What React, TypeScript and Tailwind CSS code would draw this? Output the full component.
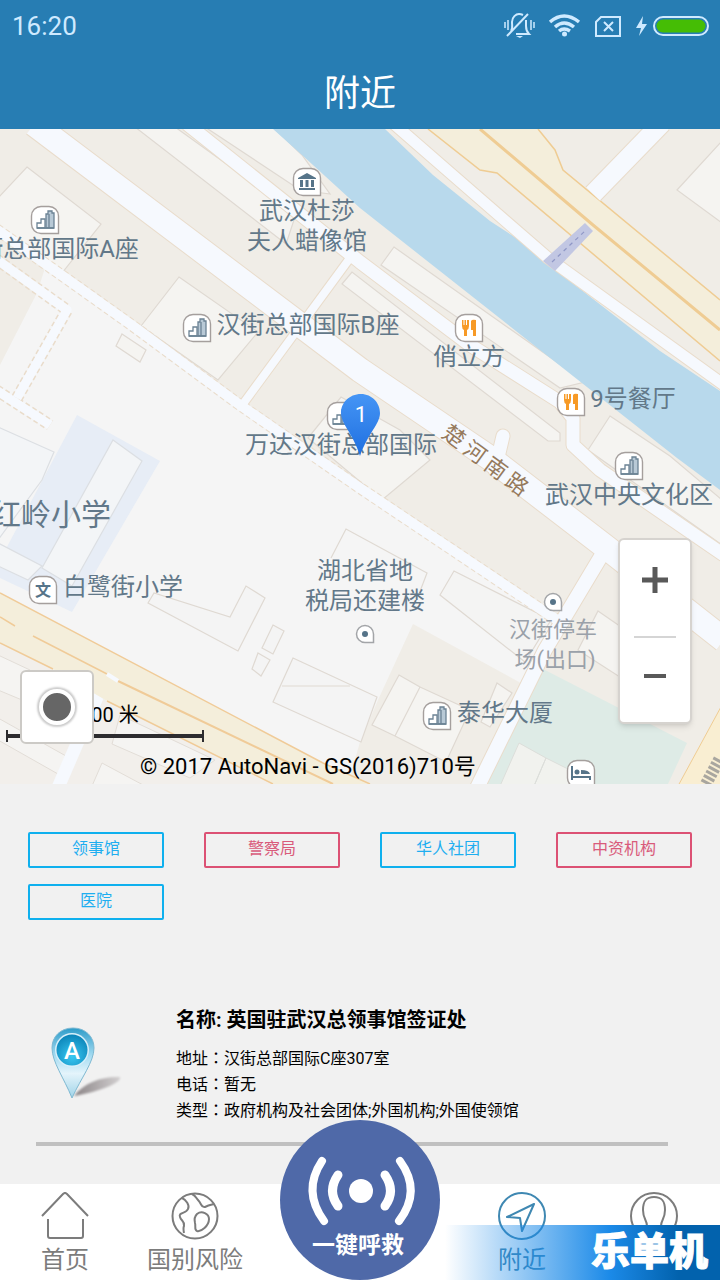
import { useState } from 'react';

const FONT = "font-[Roboto,'Noto_Sans_CJK_SC',sans-serif]";

const categories = [
  { name: '领事馆', tone: 'blue' },
  { name: '警察局', tone: 'red' },
  { name: '华人社团', tone: 'blue' },
  { name: '中资机构', tone: 'red' },
  { name: '医院', tone: 'blue' },
];

const places = [
  {
    name: '英国驻武汉总领事馆签证处',
    details: [
      { label: '地址', value: '汉街总部国际C座307室' },
      { label: '电话', value: '暂无' },
      { label: '类型', value: '政府机构及社会团体;外国机构;外国使领馆' },
    ],
  },
];

type PoiKind = 'building' | 'food' | 'museum' | 'school' | 'hotel' | 'dot';

const pois: { x: number; y: number; kind: PoiKind }[] = [
  { x: 307, y: 182, kind: 'museum' },
  { x: 45, y: 220, kind: 'building' },
  { x: 197, y: 328, kind: 'building' },
  { x: 469, y: 328, kind: 'food' },
  { x: 571, y: 402, kind: 'food' },
  { x: 341, y: 416, kind: 'building' },
  { x: 629, y: 466, kind: 'building' },
  { x: 43, y: 590, kind: 'school' },
  { x: 437, y: 716, kind: 'building' },
  { x: 581, y: 774, kind: 'hotel' },
  { x: 553, y: 602, kind: 'dot' },
  { x: 365, y: 634, kind: 'dot' },
];

const labels = [
  { x: 307, y: 219, text: '武汉杜莎' },
  { x: 307, y: 249, text: '夫人蜡像馆' },
  { x: 59, y: 257, text: '街总部国际A座' },
  { x: 308, y: 333, text: '汉街总部国际B座' },
  { x: 469, y: 365, text: '俏立方' },
  { x: 633, y: 407, text: '9号餐厅' },
  { x: 341, y: 453, text: '万达汉街总部国际' },
  { x: 629, y: 503, text: '武汉中央文化区' },
  { x: 123, y: 595, text: '白鹭街小学' },
  { x: 365, y: 579, text: '湖北省地' },
  { x: 365, y: 609, text: '税局还建楼' },
  { x: 505, y: 721, text: '泰华大厦' },
];

function Poi({ x, y, kind }: { x: number; y: number; kind: PoiKind }) {
  if (kind === 'dot') {
    return (
      <g transform={`translate(${x} ${y})`}>
        <path d="M0-8.500A8.500 8.500 0 0 0 0 8.500H8.500V0A8.500 8.500 0 0 0 0-8.500Z" fill="#fff" stroke="#a3a5a8" strokeWidth="1.500" />
        <circle r="3" fill="#567489" />
      </g>
    );
  }
  return (
    <g transform={`translate(${x} ${y})`}>
      <path
        d="M-4-13.500H4A9.500 9.500 0 0 1 13.500-4V13.500H-4A9.500 9.500 0 0 1-13.500 4V-4A9.500 9.500 0 0 1-4-13.500Z"
        fill="#fff"
        stroke="#a59f9d"
        strokeWidth="1.400"
      />
      {kind === 'building' && (
        <g fill="#b8c9d6" stroke="#6b8294" strokeWidth="1.300">
          <path d="M-8 3H-4V-1H0V8H-8Z" fill="#fff" />
          <path d="M1 8V-6H3V-9H7V-7H9V8Z" />
          <path d="M4-6V8M-8 8H9" />
        </g>
      )}
      {kind === 'food' && (
        <g fill="#f79a26">
          <path d="M-7-8H-5.500V-3H-4.500V-8H-3V-3H-2V-8H0V-2Q0 1-2 2V8H-5V2Q-7 1-7-2Z" />
          <path d="M2-7Q3-9 7-8V8H4V2H2Z" />
        </g>
      )}
      {kind === 'museum' && (
        <g fill="#567489">
          <path d="M0-9 9-4V-3H-9V-4ZM-7-2H-4V5H-7ZM-1.500-2H1.500V5H-1.500ZM4-2H7V5H4ZM-8 6H8V8H-8Z" />
        </g>
      )}
      {kind === 'school' && (
        <text y="6" textAnchor="middle" className="fill-[#567489] text-[16px] font-bold">
          文
        </text>
      )}
      {kind === 'hotel' && (
        <g fill="#567489">
          <path d="M-10-8H-8V2H10V6H8V4H-8V6H-10ZM0-4Q8-4 9 0H0Z" />
          <circle cx="-4" cy="-2" r="2.500" />
        </g>
      )}
    </g>
  );
}

function MapDrawing() {
  return (
    <svg viewBox="0 129 720 655" preserveAspectRatio="xMidYMid slice" className="block h-auto w-full">
      <rect y="129" width="720" height="655" fill="#f0ede7" />

      {/* open ground */}
      <path d="M45 268 560 620 480 784H0V365L37 293Z" fill="#f5f5f5" />
      <path d="M413 624 530 688 478 784H348L360 742 378 700Z" fill="#f0ede7" />

      {/* school campus */}
      <path d="M77 415 160 461 72 612 0 578V560Z" fill="#e7edf6" />
      <g fill="#f3f5f7" stroke="#dcdfe3" strokeWidth="1.200">
        <path d="M113 440 142 461 72 586 42 568Z" />
        <path d="M-2 427 54 452 42 480-2 540Z" />
        <path d="M-2 543 42 566 28 580-2 566Z" />
      </g>

      {/* buildings */}
      <g fill="#f5f4f1" stroke="#dfd9d2" strokeWidth="1.200">
        <path d="M27 167 101 224 62 273-2 230V198Z" />
        <path d="M179 277 258 332 218 380 141 326Z" />
        <path d="M122 334 146 350 140 362 116 346Z" />
        <path d="M135 127H175L296 214 286 244Z" />
        <path d="M205 127H273L302 155 330 194 300 190Z" />
        <path d="M342 284 352 272 560 433 560 441 548 441Z" />
        <path d="M394 247 585 382 560 388 381 265Z" />
        <path d="M610 416 670 456 722 500V545L588 450Z" />
        <path d="M722 141 677 190 722 223Z" />
        <path d="M341 397 400 430 430 460 382 500 308 438Z" />
        <path d="M454 571 551 620 525 662 440 595Z" fill="#f4f4f3" />
        <path d="M598 611 640 640V690L578 650Z" />
        <path d="M399 675 420 687 395 736 372 725ZM420 687 470 710 446 762 395 736Z" />
        <path d="M497 683 512 693 490 727 481 722Z" />
        <path d="M148 603 154 593 230 617 246 586 265 598 238 651Z" fill="#f4f4f4" />
        <path d="M273 625 284 631 273 654 262 648ZM258 653 270 660 261 676 252 669Z" fill="#f4f4f4" />
        <path d="M293 658 377 697 361 742 273 702Z" fill="#f4f4f4" />
        <path d="M331 558 346 529 427 573 419 594" fill="none" />
        <path d="M282 686H350" fill="none" />
      </g>

      {/* park */}
      <path d="M543 669 687 743 668 784H485Z" fill="#deebe6" />
      <path d="M519 743 546 758 534 786H500ZM546 758 590 780V786H534Z" fill="#f1f2ee" stroke="#dcdeda" />

      {/* river */}
      <path
        d="M273 129 302 155 360 208 677 458 720 490V391L660 351 557 271 527 245 490 221 433 175 385 129Z"
        fill="#b8d9ec"
      />

      {/* highway, north east */}
      <path d="M428 129 480 170 497 173 720 361V300L563 170 555 150 538 129Z" fill="#f4eedb" />
      <g fill="none" stroke="#efcc93" strokeWidth="1.500">
        <path d="M428 129 480 170 497 173 720 361M538 129 555 150 563 170 720 300" />
        <path d="M480 129 593 225 720 330" strokeWidth="3" />
      </g>

      {/* streets: outline first, then surface */}
      <g fill="none" stroke="#e9dccb" strokeLinejoin="round">
        <path d="M34 124 360 370 490 458 607 548 724 640" strokeWidth="26" />
        <path d="M187 124 360 262 470 345 560 402 573 418 573 445 600 470 724 555" strokeWidth="15" />
        <path d="M394 124 548 258 724 385" strokeWidth="13" />
        <path d="M662 123 593 194" strokeWidth="21" />
        <path d="M350 258 240 408" strokeWidth="10" />
        <path d="M-4 229 67 279 133 326 240 405 360 488 557 620" strokeWidth="12" strokeDasharray="5 3" />
        <path d="M-4 259 67 310 17 398M-4 390 50 425" strokeWidth="12" strokeDasharray="5 3" />
        <path d="M603 553 545 650 476 790" strokeWidth="16" />
        <path d="M503 436 495 470" strokeWidth="15" strokeLinecap="round" />
      </g>
      <g fill="none" stroke="#f6f9fe" strokeLinejoin="round">
        <path d="M34 124 360 370 490 458 607 548 724 640" strokeWidth="24" />
        <path d="M187 124 360 262 470 345 560 402 573 418 573 445 600 470 724 555" strokeWidth="13" />
        <path d="M394 124 548 258 724 385" strokeWidth="11" />
        <path d="M662 123 593 194" strokeWidth="19" />
        <path d="M350 258 240 408" strokeWidth="8" />
        <path d="M-4 229 67 279 133 326 240 405 360 488 557 620" strokeWidth="10" />
        <path d="M-4 259 67 310 17 398M-4 390 50 425" strokeWidth="9" />
        <path d="M603 553 545 650 476 790" strokeWidth="14" />
        <path d="M503 436 495 470" strokeWidth="13" strokeLinecap="round" />
      </g>

      {/* footbridge */}
      <path d="M543 261 585 223 593 231 555 271Z" fill="#c2c7e3" />
      <path d="M552 262 586 230" stroke="#8f97c6" strokeWidth="1.200" strokeDasharray="4 4" />

      {/* highway, south west */}
      <path d="M0 643 53 669 107 701 273 784H0Z" fill="#f2efeb" />
      <g fill="#f5f4f2" stroke="#e2ddd7">
        <path d="M-2 655 30 670 22 700-2 690ZM-2 718 66 756 58 774-2 740ZM120 715 215 760 190 778 112 744ZM102 763 145 786H92Z" />
      </g>
      <path d="M98 695 57 790" stroke="#f6f9fe" strokeWidth="13" />
      <path d="M0 593 323 763 370 784H273L107 701 53 669 0 643Z" fill="#f4eedb" />
      <g fill="none" stroke="#f0cb98" strokeWidth="1.500">
        <path d="M0 593 323 763 370 784M0 643 53 669M107 701 273 784" />
        <path d="M33 636 107 674M0 617 15 626" />
        <path d="M118 681 333 784" strokeWidth="2" />
      </g>
      <path d="M107 674 118 681" stroke="#f6f9fe" strokeWidth="4" />
      <path d="M722 705 678 786H722Z" fill="#f9eed2" stroke="#efcc93" />
      <path d="M706 784 720 758" stroke="#a9a69f" strokeWidth="12" strokeDasharray="3 2" />

      {pois.map((p) => (
        <Poi key={`${p.x}-${p.y}`} {...p} />
      ))}

      <g textAnchor="middle" className="fill-[#627889] text-[24px]">
        {labels.map((l) => (
          <text key={l.text} x={l.x} y={l.y}>
            {l.text}
          </text>
        ))}
        <text x="51" y="525" className="text-[30px]">
          红岭小学
        </text>
        <g className="fill-[#9aa1a9] text-[22px]">
          <text x="553" y="637">汉街停车</text>
          <text x="555" y="667">场(出口)</text>
        </g>
      </g>
      <g textAnchor="middle" className="fill-[#957a5c] text-[22px]">
        {['楚', '河', '南', '路'].map((ch, i) => (
          <text key={ch} y="8" transform={`translate(${454 + i * 21} ${436 + i * 16}) rotate(36)`}>
            {ch}
          </text>
        ))}
      </g>

      {/* result marker */}
      <defs>
        <linearGradient id="marker" x1="0" y1="0" x2="0" y2="1">
          <stop offset="0" stopColor="#4595f5" />
          <stop offset="1" stopColor="#1f6fe0" />
        </linearGradient>
      </defs>
      <path d="M361 394C349 394 341 403 341 413C341 424 353 433 360 456C368 433 380 424 380 413C380 403 372 394 361 394Z" fill="url(#marker)" />
      <text x="361" y="422" textAnchor="middle" className="fill-white text-[22px]">
        1
      </text>

      {/* scale and copyright */}
      <path d="M7 736H203M7 730V742M203 730V742" stroke="#2d2c2f" strokeWidth="2" />
      <path d="M7 736H203" stroke="#2d2c2f" strokeWidth="4" />
      <text x="80" y="722" className="fill-black text-[20px]">
        100 米
      </text>
      <text x="140" y="774" className="fill-black text-[22px]">
        © 2017 AutoNavi - GS(2016)710号
      </text>
    </svg>
  );
}

function StatusIcons() {
  return (
    <svg viewBox="500 8 212 34" className="h-[34px] w-[212px]" fill="none" stroke="#cfeaff" strokeWidth="2">
      {/* muted bell */}
      <path d="M511 30C513 28 512 25 512 21C512 16 516 13 519 13Q521 13 523 14M526 19V25C526 29 527 31 529 33H516" />
      <path d="M507 35 528 13" />
      <path d="M505 21V27M508 19V29M531 19V29M534 21V27" strokeWidth="1.500" />
      <path d="M516 35H523L520 37Z" fill="#cfeaff" stroke="none" />
      {/* wifi */}
      <g strokeWidth="3.500">
        <path d="M550 21Q564 9 579 21" />
        <path d="M555 26Q564 18 574 26" />
        <path d="M559 30Q564 26 570 30" />
      </g>
      <circle cx="564.500" cy="33" r="2.500" fill="#cfeaff" stroke="none" />
      {/* no sim */}
      <path d="M601 16H620V35H596V21Z" />
      <path d="M604 21 613 30M613 21 604 30" />
      {/* charging battery */}
      <path d="M643 15 636 27H641L639 35 647 23H642Z" fill="#cfeaff" stroke="none" />
      <rect x="654" y="16" width="54" height="18" rx="9" />
      <rect x="656.500" y="18.500" width="49" height="13" rx="6.500" fill="#45bd05" stroke="none" />
    </svg>
  );
}

function PlacePin() {
  return (
    <svg viewBox="48 1024 78 78" className="h-[78px] w-[78px]">
      <defs>
        <linearGradient id="pin" x1="0" y1="0" x2="0" y2="1">
          <stop offset="0" stopColor="#2d9cc9" />
          <stop offset="0.400" stopColor="#a6dcf2" />
          <stop offset="0.650" stopColor="#e4f4fb" />
          <stop offset="1" stopColor="#9fd3e8" />
        </linearGradient>
        <radialGradient id="disc" cx="0.500" cy="0.700" r="0.700">
          <stop offset="0" stopColor="#39c8f2" />
          <stop offset="1" stopColor="#0b84b8" />
        </radialGradient>
        <linearGradient id="shade">
          <stop offset="0" stopColor="#8b8587" />
          <stop offset="1" stopColor="#d2cfd0" />
        </linearGradient>
        <filter id="soft">
          <feGaussianBlur stdDeviation="1" />
        </filter>
      </defs>
      <path d="M74 1096C84 1082 104 1076 120 1077C122 1083 98 1092 74 1096Z" fill="url(#shade)" filter="url(#soft)" />
      <path
        d="M73 1028C60 1028 52 1037 52 1048C52 1062 64 1078 72 1098C81 1078 94 1062 94 1048C94 1037 86 1028 73 1028Z"
        fill="url(#pin)"
        stroke="#7fb9d2"
      />
      <circle cx="72" cy="1050" r="17" fill="#d8f0fa" />
      <circle cx="72" cy="1050" r="15.500" fill="url(#disc)" />
      <text x="72" y="1059" textAnchor="middle" className="fill-white text-[24px] font-medium">
        A
      </text>
    </svg>
  );
}

function Chip({ name, tone, onClick }: { name: string; tone: string; onClick: () => void }) {
  return (
    <button
      onClick={onClick}
      className={`h-9 rounded-[2px] border-2 pb-[2px] text-base leading-6 ${
        tone === 'blue' ? 'border-[#0fb0ee] text-[#1eaef0]' : 'border-[#dc5174] text-[#d95b7b]'
      }`}
    >
      {name}
    </button>
  );
}

const navItem = 'flex flex-col items-center pt-2 text-2xl leading-8';

export default function App() {
  const [, setCategory] = useState('领事馆');

  return (
    <div className={`flex min-h-screen flex-col bg-[#f1f1f1] text-black ${FONT}`}>
      <header className="bg-[#277db3]">
        <div className="flex h-[52px] items-center justify-between pr-2 pl-3">
          <span className="text-[26px] text-[#cfeaff]">16:20</span>
          <StatusIcons />
        </div>
        <h1 className="h-[77px] text-center text-4xl leading-[84px] text-white">附近</h1>
      </header>

      <main className="grow">
        <section className="relative" aria-label="地图">
          <MapDrawing />
          <button
            aria-label="定位"
            className="absolute bottom-10 left-5 flex h-[74px] w-[74px] items-center justify-center rounded-md border-2 border-[#cccac6] bg-white"
          >
            <span className="h-9 w-9 rounded-full border-4 border-white bg-[#666] shadow-[0_0_2px_2px_#ccc]" />
          </button>
          <div className="absolute right-7 bottom-[60px] flex h-[186px] w-[74px] flex-col items-center rounded-md border-2 border-[#d6d3cf] bg-white shadow-md">
            <button aria-label="放大" className="flex w-full grow items-center justify-center">
              <svg viewBox="0 0 26 26" className="mb-4 h-[26px] w-[26px]">
                <path d="M0 13H26M13 0V26" stroke="#595959" strokeWidth="5" />
              </svg>
            </button>
            <span className="h-[2px] w-[42px] bg-[#d5d5d5]" />
            <button aria-label="缩小" className="flex h-[84px] w-full items-center justify-center">
              <svg viewBox="0 0 22 4" className="mb-2 h-1 w-[22px]">
                <path d="M0 2H22" stroke="#595959" strokeWidth="4" />
              </svg>
            </button>
          </div>
        </section>

        <section className="grid grid-cols-4 gap-x-10 gap-y-4 px-7 pt-12">
          {categories.map((c) => (
            <Chip key={c.name} name={c.name} tone={c.tone} onClick={() => setCategory(c.name)} />
          ))}
        </section>

        <ul className="mt-[86px] mr-[52px] ml-9">
          {places.map((p) => (
            <li key={p.name} className="flex border-b-4 border-[#c0c0c0] pb-[18px]">
              <div className="w-[140px] shrink-0 pt-[18px] pl-3">
                <PlacePin />
              </div>
              <div>
                <h2 className="mb-3 text-xl leading-7 font-bold">名称: {p.name}</h2>
                {p.details.map((d) => (
                  <p key={d.label} className="text-base leading-[26px]">
                    {d.label}
                    <span className="font-['Noto_Sans_CJK_TC',sans-serif] leading-none" lang="zh-TW">：</span>
                    {d.value}
                  </p>
                ))}
              </div>
            </li>
          ))}
        </ul>
      </main>

      <nav className="relative grid h-24 grid-cols-[65fr_65fr_100fr_62fr_68fr] bg-white text-[#7c7c7c]">
        <a href="#home" className={navItem}>
          <svg viewBox="0 0 48 48" className="h-12 w-12" fill="none" stroke="#7c7c7c" strokeWidth="2">
            <path d="M1 24 22 2Q24 0 26 2L47 24" />
            <path d="M7 27V44Q7 46 9 46H40Q42 46 42 44V27" />
          </svg>
          <span className="mt-1">首页</span>
        </a>
        <a href="#risk" className={navItem}>
          <svg viewBox="0 0 48 48" className="h-12 w-12" fill="none" stroke="#7c7c7c" strokeWidth="2">
            <circle cx="24" cy="24" r="22.500" />
            <path d="M11 6C15 8 19 13 17 17C15 22 7 20 9 25C10 29 14 29 13 34Q12 36 13 41" />
            <path d="M21 2C25 4 25 6 27 8C31 12 30 16 34 15C38 13 39 13 43 12" />
            <path d="M26 22C31 18 38 22 38 27C38 34 30 40 26 39C23 38 25 34 24 31C23 27 24 24 26 22Z" />
          </svg>
          <span className="mt-1">国别风险</span>
        </a>
        <div className="flex items-end justify-center">
          <button className="-mt-16 h-40 w-40 shrink-0 rounded-full bg-[#4f69a8] text-white">
            <svg viewBox="0 0 160 112" className="block w-40" fill="none" stroke="#fff" strokeLinecap="round">
              <circle cx="81" cy="71" r="12" fill="#fff" stroke="none" />
              <path d="M42 41Q22 71 44 101M120 41Q142 71 119 101" strokeWidth="8" />
              <path d="M58 55Q47 71 58 86M105 55Q116 71 105 86" strokeWidth="9" />
            </svg>
            <span className="block h-12 pr-1 text-[23px] leading-7 font-bold">一键呼救</span>
          </button>
        </div>
        <a href="#nearby" className={`${navItem} text-[#3f88b2]`}>
          <svg viewBox="0 0 48 48" className="h-12 w-12" fill="none" stroke="#3f88b2" strokeWidth="2">
            <circle cx="24" cy="24" r="23" />
            <path d="M36 12 9 25 22 26 24 39Z" strokeLinejoin="round" />
          </svg>
          <span className="mt-1">附近</span>
        </a>
        <a href="#me" className={`${navItem} pl-1`} aria-label="我的">
          <svg viewBox="0 0 48 48" className="h-12 w-12" fill="none" stroke="#7c7c7c" strokeWidth="2">
            <circle cx="24" cy="24" r="23" />
            <path d="M17 34C17 28 13 27 13 18C13 9 16 5 24 5C32 5 35 9 35 18C35 27 31 28 31 34" />
          </svg>
        </a>

        <div className="pointer-events-none absolute right-0 bottom-0 flex h-[55px] w-[275px] items-center justify-end bg-linear-to-r from-[#1b86e0]/0 via-[#1b8ae8] via-60% to-[#0262ad] to-85% pr-3">
          <strong className="text-[39px] leading-[55px] font-black text-white [-webkit-text-stroke:1px_white]">
            乐单机
          </strong>
        </div>
      </nav>
    </div>
  );
}
